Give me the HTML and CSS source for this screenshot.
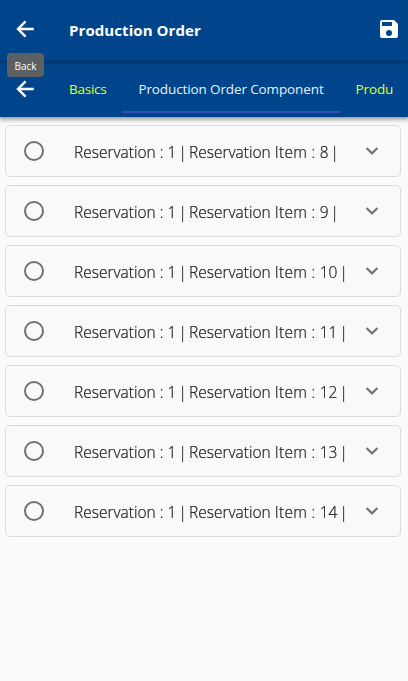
FILE: index.html
```html
<!DOCTYPE html>
<html lang="en">
<head>
<meta charset="utf-8">
<title>Production Order</title>
<link rel="stylesheet" href="styles.css">
</head>
<body>
<svg class="defs" aria-hidden="true">
  <symbol id="back" viewBox="0 0 24 24"><path d="M20.800 12H5.400M12.600 4.400 5 12l7.600 7.600" fill="none" stroke="currentColor" stroke-width="2.400"/></symbol>
  <symbol id="chevron" viewBox="0 0 24 24"><path d="M7.410 8.390 12 12.970l4.590-4.580L18 9.800l-6 6-6-6z" fill="currentColor" stroke="currentColor" stroke-width=".3"/></symbol>
</svg>
<header class="topbar">
  <button class="icon-button" aria-label="Back"><svg class="icon"><use href="#back"/></svg></button>
  <h1 class="title">Production Order</h1>
  <button class="icon-button save" aria-label="Save"><svg class="icon" viewBox="0 0 24 24"><path d="M17 3H5a2 2 0 0 0-2 2v14a2 2 0 0 0 2 2h14a2 2 0 0 0 2-2V7zm-5 16a3 3 0 1 1 0-6 3 3 0 0 1 0 6zm3-10H5V5h10z" fill="currentColor"/></svg></button>
  <span class="tooltip">Back</span>
</header>
<nav class="tabs">
  <button class="icon-button" aria-label="Back"><svg class="icon"><use href="#back"/></svg></button>
  <div class="tab-list">
    <a class="tab">Basics</a>
    <a class="tab active">Production Order Component</a>
    <a class="tab">Produ</a>
  </div>
</nav>
<main class="list">
  <div class="card"><span class="radio"></span><span class="label">Reservation : 1<span class="bar"> | </span>Reservation <span class="item">Item :</span> 8<span class="bar"> |</span></span><svg class="chevron"><use href="#chevron"/></svg></div>
  <div class="card"><span class="radio"></span><span class="label">Reservation : 1<span class="bar"> | </span>Reservation <span class="item">Item :</span> 9<span class="bar"> |</span></span><svg class="chevron"><use href="#chevron"/></svg></div>
  <div class="card"><span class="radio"></span><span class="label">Reservation : 1<span class="bar"> | </span>Reservation <span class="item">Item :</span> 10<span class="bar"> |</span></span><svg class="chevron"><use href="#chevron"/></svg></div>
  <div class="card"><span class="radio"></span><span class="label">Reservation : 1<span class="bar"> | </span>Reservation <span class="item">Item :</span> 11<span class="bar"> |</span></span><svg class="chevron"><use href="#chevron"/></svg></div>
  <div class="card"><span class="radio"></span><span class="label">Reservation : 1<span class="bar"> | </span>Reservation <span class="item">Item :</span> 12<span class="bar"> |</span></span><svg class="chevron"><use href="#chevron"/></svg></div>
  <div class="card"><span class="radio"></span><span class="label">Reservation : 1<span class="bar"> | </span>Reservation <span class="item">Item :</span> 13<span class="bar"> |</span></span><svg class="chevron"><use href="#chevron"/></svg></div>
  <div class="card"><span class="radio"></span><span class="label">Reservation : 1<span class="bar"> | </span>Reservation <span class="item">Item :</span> 14<span class="bar"> |</span></span><svg class="chevron"><use href="#chevron"/></svg></div>
</main>
</body>
</html>
```
FILE: styles.css
```css
* { box-sizing: border-box; }
body {
  margin: 0;
  min-height: 681px;
  overflow: hidden;
  background: #fafafa;
  font-family: "Open Sans", "Noto Sans", sans-serif;
}
.defs { position: absolute; width: 0; height: 0; }
.topbar, .tabs {
  display: flex;
  align-items: center;
  background: #00458b;
  color: #fff;
}
.topbar {
  position: relative;
  height: 61px;
  padding: 0 7px 3px 13px;
  box-shadow: inset 0 -2px 2px -1px rgba(0, 0, 0, .1), 0 1px 4px rgba(0, 0, 0, .35);
  z-index: 1;
}
.tabs {
  height: 56px;
  padding-left: 13px;
  box-shadow: 0 1px 5px 1px rgba(0, 0, 0, .45);
}
.icon-button {
  display: flex;
  flex: none;
  padding: 0;
  border: 0;
  background: none;
  color: inherit;
}
.icon { width: 24px; height: 24px; }
.save { margin-left: auto; }
.title {
  margin: 1px 0 0 32px;
  font-size: 15px;
  font-weight: 700;
  letter-spacing: .08px;
}
.tooltip {
  position: absolute;
  left: 7px;
  top: 53px;
  width: 37px;
  height: 24px;
  border-radius: 4px;
  background: #5d6063;
  font-size: 10px;
  line-height: 26px;
  text-align: center;
}
.tab-list {
  display: flex;
  height: 100%;
  margin-left: 16px;
  overflow: hidden;
}
.tab {
  flex: none;
  padding: 0 16px;
  height: 52px;
  line-height: 57px;
  font-size: 13.500px;
  letter-spacing: -.12px;
  color: #dfff32;
  white-space: nowrap;
}
.tab:first-child { letter-spacing: -.25px; }
.active { color: #e3f2ff; border-bottom: 2px solid #3051b5; }
.list {
  display: flex;
  flex-direction: column;
  gap: 8px;
  padding: 8px 7px 0 5px;
}
.card {
  display: flex;
  align-items: center;
  height: 52px;
  padding: 0 16px 0 18px;
  border: 1px solid #dadce0;
  border-radius: 5px;
  background: #f8f9fb;
}
.radio {
  width: 20px;
  height: 20px;
  border: 2px solid #717171;
  border-radius: 50%;
}
.label {
  margin: 2px 0 0 30px;
  font-size: 15.500px;
  font-weight: 300;
  color: #161616;
  -webkit-text-stroke: .2px #161616;
  white-space: nowrap;
  will-change: transform;
}
.bar { word-spacing: -1.900px; }
.item { letter-spacing: .3px; }
.chevron {
  width: 24px;
  height: 24px;
  margin-left: auto;
  color: #717171;
}
```
